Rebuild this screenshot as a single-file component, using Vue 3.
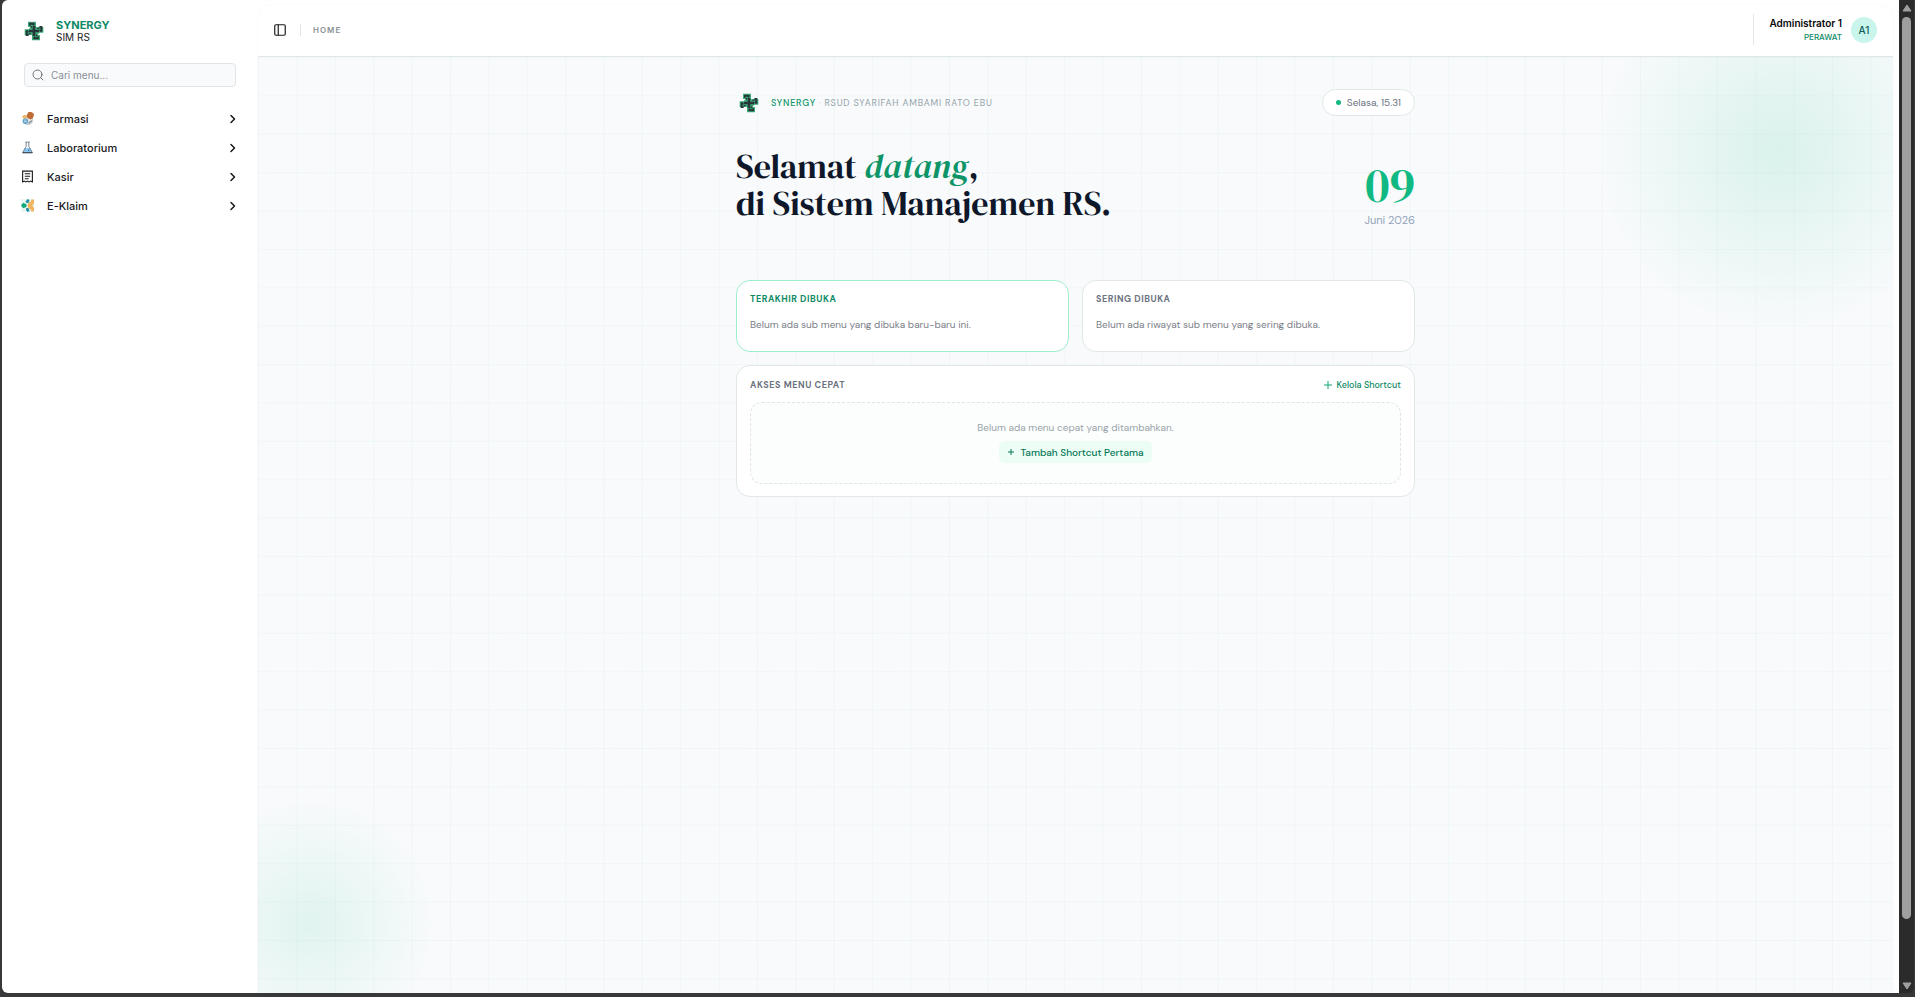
<script setup>
import { ref } from 'vue'

const query = ref('')
const menu = ['Farmasi', 'Laboratorium', 'Kasir', 'E-Klaim']
</script>

<template>
  <div class="screen">
    <svg class="defs" width="0" height="0" aria-hidden="true">
      <symbol id="brand" viewBox="0 0 60 60">
        <path d="M12 2H36V18H58V35H46L40 42H48V58H24V42H2V25H14L20 18H12Z" fill="#3fae78" />
        <g fill="#28373b">
          <path d="M15 5H32V12L26 16V11H20V14H15Z" />
          <path d="M55 15V32H48L43 26H49V20H46V15Z" />
          <path d="M45 55H28V48L34 44V49H40V46H45Z" />
          <path d="M5 45V28H12L17 34H11V40H14V45Z" />
          <path d="M20 15H26V20H20ZM46 20V26H40V20ZM40 46H34V40H40ZM14 40V34H20V40Z" />
        </g>
        <path d="M30 14V46M14 30H46" stroke="#3fae78" stroke-width="12" />
        <path d="M30 15V45M15 30H45" stroke="#26363a" stroke-width="8" />
      </symbol>
    </svg>

    <div class="window">
      <aside class="sidebar">
        <div class="brand">
          <svg class="logo"><use href="#brand" /></svg>
          <div>
            <strong>SYNERGY</strong>
            <span>SIM RS</span>
          </div>
        </div>
        <label class="search">
          <svg width="12" height="12" viewBox="0 0 24 24" fill="none" stroke="#71717a" stroke-width="2" stroke-linecap="round"><circle cx="11" cy="11" r="9" /><path d="m22 22-4.500-4.500" /></svg>
          <input v-model="query" type="text" placeholder="Cari menu..." aria-label="Cari menu" />
        </label>
        <nav>
          <button v-for="(item, i) in menu" :key="item" type="button">
            <svg v-if="i === 0" class="ico" viewBox="0 0 24 24">
              <circle cx="13" cy="15" r="8.500" fill="#e3e6e8" stroke="#a9adb3" />
              <rect x="11" y="0" width="12" height="13" rx="5" fill="#bf6b34" transform="rotate(22 17 7)" />
              <path d="M2 10C3 5 8 4 12 8L9 13Z" fill="#e8b56a" />
              <circle cx="8" cy="17" r="5" fill="#5b9cc4" /><path d="M5 18H11M6 15H10" stroke="#e8f3fa" stroke-width="1.500" />
              <path d="M14 21L20 16" stroke="#67717c" stroke-width="2" />
            </svg>
            <svg v-else-if="i === 1" class="ico" viewBox="0 0 24 24">
              <path d="M7 13H17L21 21H3Z" fill="#8cc8f2" />
              <path d="M8 2H16M9.500 2V10L3 21.500H21L14.500 10V2" fill="none" stroke="#6b7785" stroke-width="1.600" />
              <path d="M3 21.500H21" stroke="#445363" stroke-width="2" /><circle cx="14" cy="17" r="1.500" fill="#2f6ea8" />
            </svg>
            <svg v-else-if="i === 2" class="ico" viewBox="0 0 24 24" fill="none" stroke="#18181b" stroke-width="2">
              <path d="M3 2H21V22L18 20.500L15 22L12 20.500L9 22L6 20.500L3 22Z" /><path d="M7 7H17M7 11.500H17M7 16H14" />
            </svg>
            <svg v-else class="ico" viewBox="0 0 24 24">
              <rect width="24" height="24" fill="#eaf8f2" />
              <path d="M12 12L14 6L18 5L19 1H24V8L21 12L24 16V23H19L18 19L14 18Z" fill="#f0b55e" />
              <path d="M0 12L4 7L9 9L11 12L9 15L4 17Z" fill="#12a87d" />
              <path d="M9 4L12 0L16 2L14 7L10 8Z" fill="#2791a8" /><path d="M9 20L12 24L16 22L14 17L10 16Z" fill="#2791a8" />
            </svg>
            <span>{{ item }}</span>
            <svg class="chev" viewBox="0 0 12 12" fill="none" stroke="#18181b" stroke-width="1.500" stroke-linecap="round" stroke-linejoin="round"><path d="m4 2.500 3.500 3.500L4 9.500" /></svg>
          </button>
        </nav>
      </aside>

      <div class="panel">
        <header class="topbar">
          <button class="toggle" type="button" aria-label="Toggle sidebar">
            <svg width="14" height="14" viewBox="0 0 24 24" fill="none" stroke="#18181b" stroke-width="2"><rect x="3" y="3" width="18" height="18" rx="2" /><path d="M9 3V21" /></svg>
          </button>
          <span class="sep"></span>
          <a class="crumb" href="#">HOME</a>
          <div class="user">
            <div class="who">
              <strong>Administrator 1</strong>
              <span>PERAWAT</span>
            </div>
            <span class="avatar">A1</span>
          </div>
        </header>

        <main class="canvas">
          <div class="content">
            <div class="row intro">
              <div class="org">
                <svg class="logo"><use href="#brand" /></svg>
                <span><b>SYNERGY</b><i>·</i>RSUD SYARIFAH AMBAMI RATO EBU</span>
              </div>
              <span class="clock"><span class="dot"></span>Selasa, 15.31</span>
            </div>

            <div class="row hero">
              <h1>Selamat <em>datang</em>,<br />di Sistem Manajemen RS.</h1>
              <div class="date">
                <strong>09</strong>
                <span>Juni 2026</span>
              </div>
            </div>

            <div class="cards">
              <section class="card recent">
                <h2>TERAKHIR DIBUKA</h2>
                <p>Belum ada sub menu yang dibuka baru-baru ini.</p>
              </section>
              <section class="card">
                <h2>SERING DIBUKA</h2>
                <p>Belum ada riwayat sub menu yang sering dibuka.</p>
              </section>
              <section class="card wide">
                <div class="row">
                  <h2>AKSES MENU CEPAT</h2>
                  <button class="manage" type="button">
                    <svg width="10" height="10" viewBox="0 0 10 10" stroke="#10a877"><path d="M5 1V9M1 5H9" /></svg>
                    Kelola Shortcut
                  </button>
                </div>
                <div class="empty">
                  <p>Belum ada menu cepat yang ditambahkan.</p>
                  <button class="add" type="button">
                    <svg width="8" height="8" viewBox="0 0 8 8" stroke="#047857"><path d="M4 1V7M1 4H7" /></svg>
                    Tambah Shortcut Pertama
                  </button>
                </div>
              </section>
            </div>
          </div>
        </main>
      </div>
    </div>

    <div class="scrollbar" aria-hidden="true">
      <svg width="10" height="8" viewBox="0 0 10 8"><path d="M5 1L9 7H1Z" fill="#9f9f9f" stroke="#9f9f9f" stroke-linejoin="round" /></svg>
      <div class="track"><div class="thumb"></div></div>
      <svg width="10" height="8" viewBox="0 0 10 8"><path d="M5 7L9 1H1Z" fill="#9f9f9f" stroke="#9f9f9f" stroke-linejoin="round" /></svg>
    </div>
  </div>
</template>

<style>
body { background: #38383b; }
</style>

<style scoped>
* { box-sizing: border-box; }
button { border: 0; background: none; padding: 0; font: inherit; color: inherit; cursor: pointer; }
h1, h2, p { margin: 0; }

.screen { display: flex; height: 100vh; background: #38383b; font-family: Inter, "Liberation Sans", sans-serif; color: #18181b; }
.defs { position: absolute; }
.window { flex: 1; display: flex; margin: 0 0 4px 2px; padding-right: 6px; background: #fff; border-radius: 6px 0 0 6px; min-width: 0; overflow: hidden; }

.sidebar { width: 256px; flex: none; padding: 19px 22px 0 22px; }
.logo { width: 20px; height: 20px; flex: none; }
.brand { display: flex; align-items: center; gap: 12px; height: 24px; }
.brand strong, .brand span { display: block; line-height: 12px; }
.brand strong { font-size: 11px; font-weight: 700; color: #0d8a64; }
.brand span { font-size: 10px; }
.search { display: flex; align-items: center; gap: 7px; height: 24px; margin-top: 20px; padding: 0 7px; border: 1px solid #e2e5e8; border-radius: 4px; background: #f8fafc; }
.search svg { flex: none; }
.search input { flex: 1; min-width: 0; border: 0; padding: 0; background: none; outline: 0; font: 10px/14px Inter, sans-serif; color: #18181b; }
.search input::placeholder { color: #8b8f96; opacity: 1; }
nav { margin: 17px 0 0 -3px; }
nav button { display: flex; align-items: center; width: 100%; height: 29px; font-size: 11px; font-weight: 500; text-align: left; }
.ico { width: 13px; height: 13px; margin-right: 13px; flex: none; }
nav span { flex: 1; }
.chev { width: 12px; height: 12px; margin-right: -3px; }

.panel { flex: 1; display: flex; flex-direction: column; margin-top: 5px; min-width: 0; border-radius: 13px 13px 0 0; overflow: hidden; box-shadow: 0 0 2px rgba(0, 0, 0, .07); }
.topbar { display: flex; align-items: center; height: 52px; flex: none; padding: 0 16px 2px 15px; background: #fff; border-bottom: 1px solid #e2e6e8; }
.toggle { display: flex; }
.sep { width: 1px; height: 12px; margin: 0 12px 0 13px; background: #e2e5e8; }
.crumb { font-size: 8px; font-weight: 600; letter-spacing: 1px; color: #8b9298; text-decoration: none; }
.user { display: flex; align-items: center; gap: 9px; margin-left: auto; height: 31px; padding-left: 15px; border-left: 1px solid #e2e5e8; }
.who { text-align: right; }
.who strong, .who span { display: block; line-height: 14px; }
.who strong { font-size: 10px; font-weight: 600; color: #09090b; }
.who span { font-size: 8px; font-weight: 500; color: #0d8a64; }
.avatar { width: 26px; height: 26px; border-radius: 50%; background: #c9f5ec; color: #115e59; font-size: 10px; font-weight: 500; line-height: 26px; text-align: center; }

.canvas {
  flex: 1;
  padding: 32px 24px 0;
  background:
    linear-gradient(90deg, rgba(16, 150, 120, .035) 1px, transparent 1px) 0 0 / 2.4rem 2.4rem,
    linear-gradient(rgba(16, 150, 120, .035) 1px, transparent 1px) 0 0 / 2.4rem 2.4rem,
    radial-gradient(circle 180px at calc(100% - 115px) 93px, rgba(16, 185, 129, .13), rgba(16, 185, 129, 0)),
    radial-gradient(circle 124px at 52px calc(100% - 70px), rgba(16, 185, 129, .1), rgba(16, 185, 129, 0)),
    #f8fafc;
  font-family: "DM Sans", Inter, sans-serif;
}
.content { max-width: 679px; margin: 0 auto; }
.row { display: flex; justify-content: space-between; align-items: center; }
.org { display: flex; align-items: center; gap: 12px; padding-left: 3px; font-size: 9px; line-height: 12px; letter-spacing: .09em; color: #94a3a8; }
.org b { font-weight: 500; color: #0d9467; }
.org i { margin: 0 3px; font-style: normal; color: #a7e3cc; }
.clock { display: flex; align-items: center; height: 27px; padding: 0 13px; border: 1px solid #e2e8e8; border-radius: 14px; background: #fff; font-size: 10px; color: #6b7280; }
.dot { width: 5px; height: 5px; margin-right: 6px; border-radius: 50%; background: #10b981; }
.row.hero { align-items: flex-start; margin-top: 32px; }
h1 { font: 400 34px/37px "DM Serif Display", "Liberation Serif", serif; color: #0f172a; }
h1 em { color: #0d9467; }
.date { padding-top: 13px; text-align: right; }
.date strong { display: block; font: 400 48px/48px "DM Serif Display", "Liberation Serif", serif; color: #10b981; }
.date span { display: block; margin-top: 3px; font-size: 11px; line-height: 16px; color: #94a3b8; }

.cards { display: grid; grid-template-columns: 1fr 1fr; gap: 13px; margin-top: 52px; }
.card { padding: 12px 13px; border: 1px solid #e2e8e8; border-radius: 14px; background: #fff; }
.card h2 { font-size: 9px; font-weight: 700; line-height: 12px; letter-spacing: .06em; color: #6b7280; }
.card p { font-size: 10px; line-height: 14px; color: #7b8088; }
.card > p { margin: 13px 0 7px; }
.card.recent { border-color: #a0edcb; }
.card.recent h2 { color: #0d8a64; }
.card.wide { grid-column: 1 / -1; padding-top: 13px; }
.manage { display: flex; align-items: center; gap: 4px; font-size: 9px; font-weight: 500; line-height: 12px; color: #0d8a64; }
.empty { display: flex; flex-direction: column; align-items: center; gap: 6px; margin-top: 11px; padding: 18px 0 20px; border: 1px dashed #dfe5e6; border-radius: 12px; background: #fbfefc; }
.empty p { color: #9aa3ab; }
.add { display: flex; align-items: center; gap: 5px; height: 22px; padding: 0 8px; border-radius: 6px; background: #ecfdf5; font-size: 10px; font-weight: 500; color: #047857; }

.scrollbar { display: flex; flex-direction: column; align-items: center; width: 16px; margin-bottom: 4px; padding: 4px 0 3px; background: #2b2b2b; border-right: 1px solid #3a3a3a; border-radius: 0 0 6px 0; }
.track { flex: 1; width: 9px; margin: 5px 0; }
.thumb { height: 94%; border-radius: 5px; background: #9f9f9f; }
</style>
